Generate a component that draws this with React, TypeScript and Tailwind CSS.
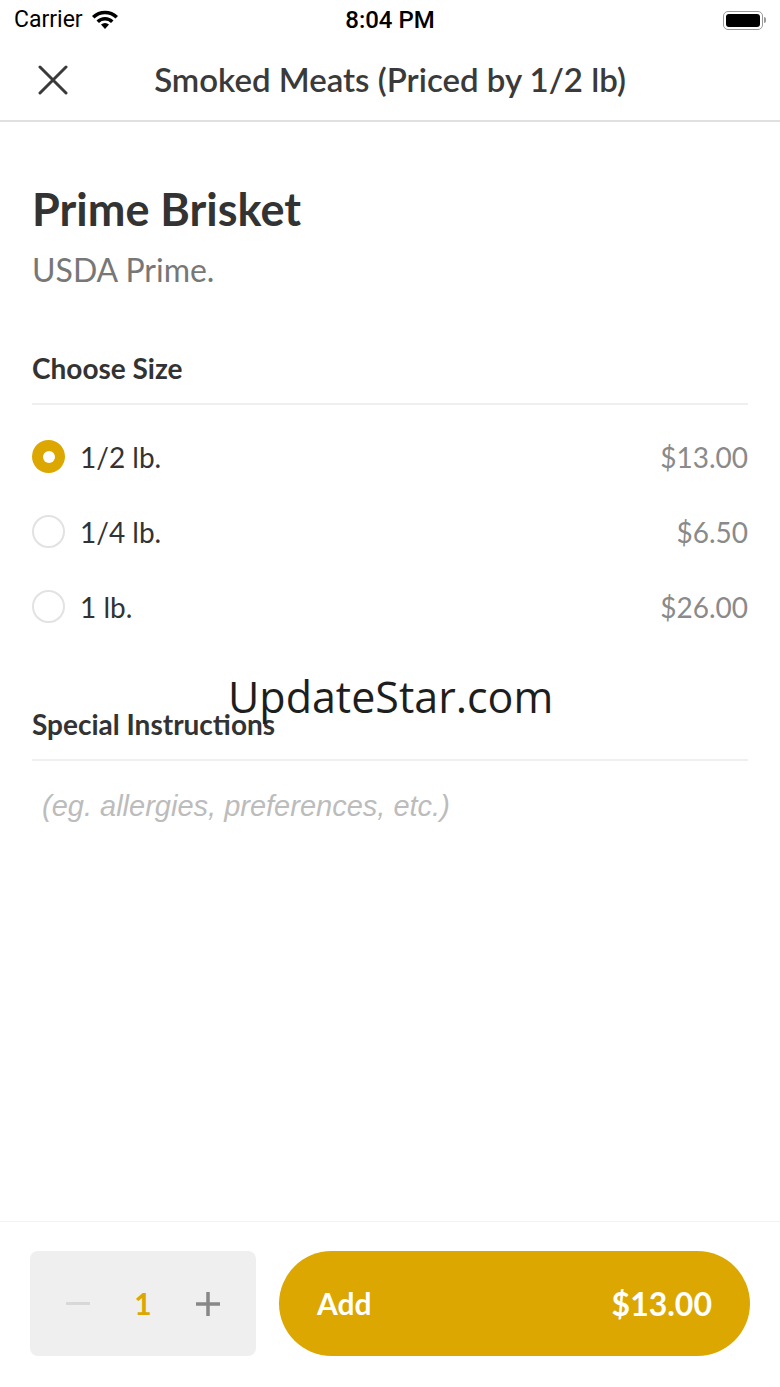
import React from "react";

const gold = "#dca700";

function Radio({ selected }: { selected: boolean }) {
  return selected ? (
    <div className="w-[33px] h-[33px] rounded-full bg-[#dca700] flex items-center justify-center shrink-0">
      <div className="w-[12px] h-[12px] rounded-full bg-white" />
    </div>
  ) : (
    <div className="w-[33px] h-[33px] rounded-full border-2 border-[#e2e2e2] bg-white shrink-0" />
  );
}

function Row({ label, price, selected }: { label: string; price: string; selected: boolean }) {
  return (
    <div className="flex items-center h-[75px]">
      <Radio selected={selected} />
      <span className="ml-[15px] text-[28px] text-[#333]">{label}</span>
      <span className="ml-auto text-[28px] text-[#8a8a8a]">{price}</span>
    </div>
  );
}

export default function App() {
  return (
    <div
      className="w-[780px] h-[1387px] bg-white flex flex-col relative overflow-hidden"
      style={{ fontFamily: "Lato, 'Noto Sans', sans-serif" }}
    >
      {/* status bar */}
      <div className="h-[40px] flex items-center px-[14px] relative" style={{ fontFamily: "Roboto, 'Liberation Sans', sans-serif" }}>
        <span className="text-[23px] text-black">Carrier</span>
        <svg className="ml-[8px]" width="28" height="20" viewBox="0 0 28 20">
          <path d="M14 19 L10 14.5 A6 6 0 0 1 18 14.5 Z" fill="#000" />
          <path d="M5.5 10.5 A12 12 0 0 1 22.5 10.5 L20 13 A8.5 8.5 0 0 0 8 13 Z" fill="#000" />
          <path d="M1 6 A18.5 18.5 0 0 1 27 6 L24.5 8.6 A15 15 0 0 0 3.5 8.6 Z" fill="#000" />
        </svg>
        <span className="absolute left-1/2 -translate-x-1/2 text-[24px] font-medium text-black">8:04 PM</span>
        <div className="ml-auto flex items-center">
          <div className="w-[40px] h-[19px] rounded-[5px] border-[1.5px] border-[#999] p-[2px]">
            <div className="w-full h-full rounded-[3px] bg-black" />
          </div>
          <div className="w-[2px] h-[6px] bg-[#999] rounded-r ml-[1px]" />
        </div>
      </div>

      {/* nav bar */}
      <div className="h-[82px] flex items-center relative border-b-2 border-[#e0e0e0]">
        <svg className="absolute left-[38px]" width="30" height="30" viewBox="0 0 30 30">
          <path d="M2 2 L28 28 M28 2 L2 28" stroke="#3a3a3a" strokeWidth="3" strokeLinecap="round" />
        </svg>
        <div className="w-full text-center text-[33px] font-semibold text-[#3a3a3a]">Smoked Meats (Priced by 1/2 lb)</div>
      </div>

      {/* content */}
      <div className="flex-1 px-[32px] pt-[58px]">
        <div className="text-[45px] font-bold text-[#333] leading-[58px]">Prime Brisket</div>
        <div className="text-[32px] text-[#777] leading-[40px] mt-[12px]">USDA Prime.</div>

        <div className="mt-[61px] text-[28px] font-bold text-[#333] leading-[34px]">Choose Size</div>
        <div className="mt-[18px] h-[2px] bg-[#efefef]" />
        <div className="pt-[14px]">
          <Row label="1/2 lb." price="$13.00" selected />
          <Row label="1/4 lb." price="$6.50" selected={false} />
          <Row label="1 lb." price="$26.00" selected={false} />
        </div>

        <div className="mt-[63px] text-[28px] font-bold text-[#333] leading-[34px]">Special Instructions</div>
        <div className="mt-[18px] h-[2px] bg-[#efefef]" />
        <div
          className="mt-[27px] ml-[10px] text-[29px] italic text-[#bcbcbc] leading-[36px]"
          style={{ fontFamily: "'Liberation Sans', Arial, sans-serif" }}
        >
          (eg. allergies, preferences, etc.)
        </div>
      </div>

      {/* bottom bar */}
      <div className="h-[166px] border-t border-[#f2f2f2] flex items-start px-[30px] pt-[29px] gap-[23px]">
        <div className="w-[226px] h-[105px] rounded-[8px] bg-[#efefef] flex items-center">
          <span className="w-[96px] flex justify-center">
            <span className="block w-[24px] h-[3px] bg-[#d8d8d8]" />
          </span>
          <span className="w-[34px] text-center text-[30px] font-bold text-[#dca700]">1</span>
          <span className="w-[96px] flex justify-center">
            <svg width="24" height="24" viewBox="0 0 24 24">
              <path d="M12 0 V24 M0 12 H24" stroke="#888" strokeWidth="3.5" />
            </svg>
          </span>
        </div>
        <div
          className="flex-1 h-[105px] rounded-full flex items-center px-[38px] text-white font-bold"
          style={{ backgroundColor: gold }}
        >
          <span className="text-[30px]">Add</span>
          <span className="ml-auto text-[32px]">$13.00</span>
        </div>
      </div>

      {/* watermark */}
      <div
        className="absolute left-[228px] top-[669px] text-[43px] text-[#1e1e1e] leading-[56px]"
        style={{ fontFamily: "'Open Sans', sans-serif" }}
      >
        UpdateStar.com
      </div>
    </div>
  );
}
